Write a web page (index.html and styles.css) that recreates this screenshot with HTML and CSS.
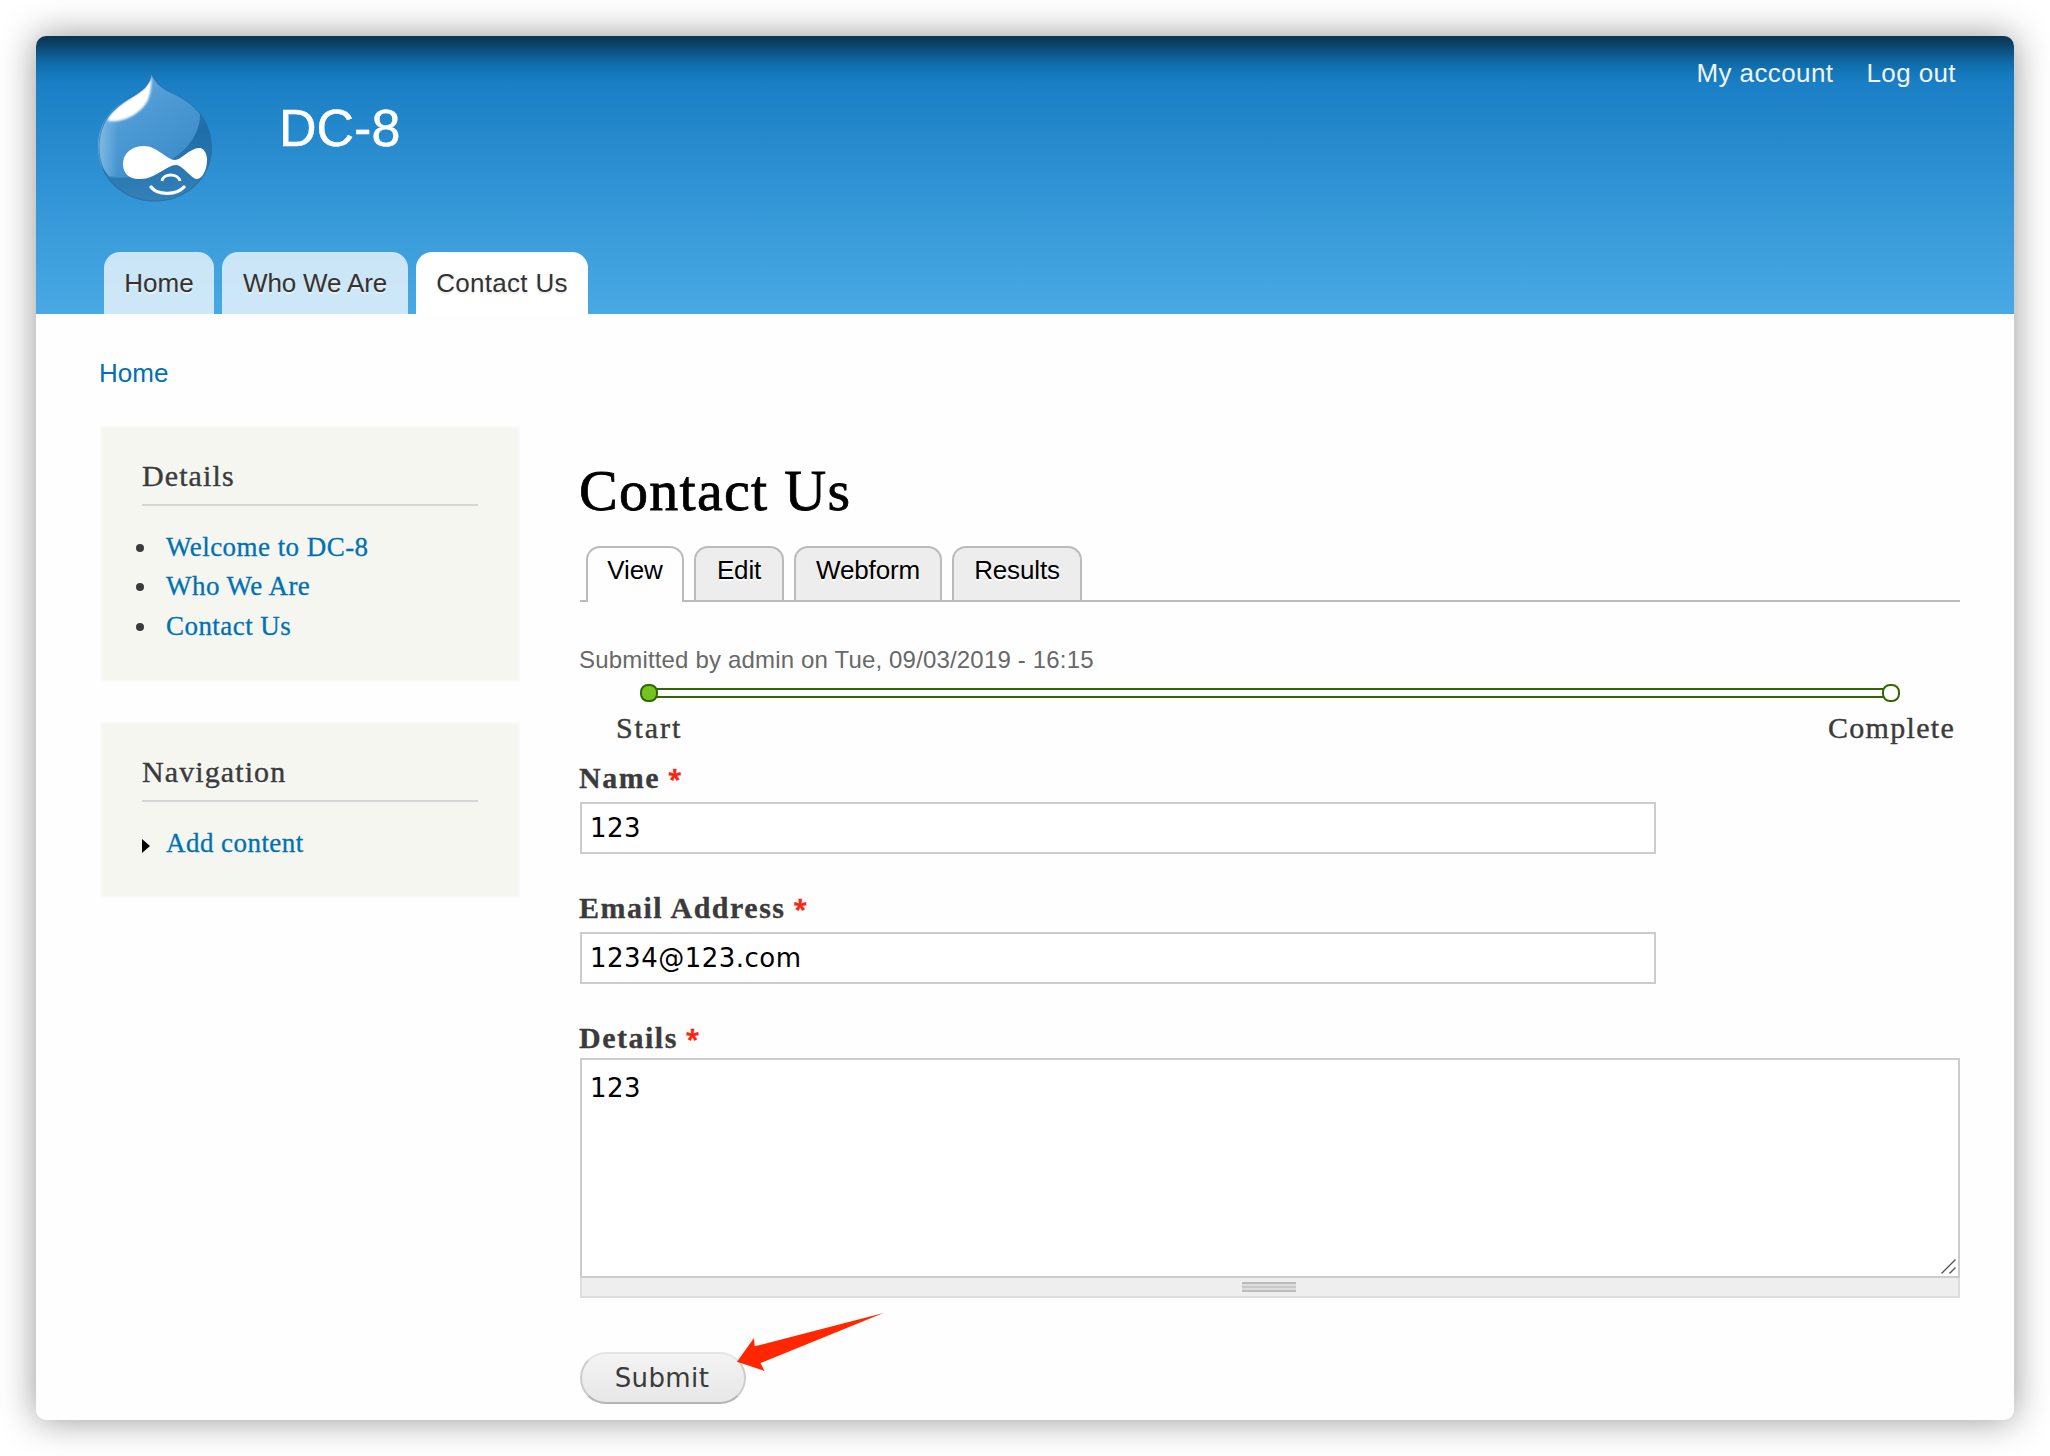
FILE: index.html
```html
<!DOCTYPE html>
<html lang="en">
<head>
<meta charset="utf-8">
<title>Contact Us | DC-8</title>
<link rel="stylesheet" href="styles.css">
</head>
<body>
<div class="window">
  <header class="header">
    <div class="brand">
      <svg class="logo" viewBox="0 0 114 130" aria-hidden="true">
        <defs>
          <linearGradient id="body" x1="0" y1="0" x2="0.7" y2="1">
            <stop offset="0" stop-color="#7cb4e0"/>
            <stop offset="0.45" stop-color="#4e9bd5"/>
            <stop offset="1" stop-color="#3b8cc9"/>
          </linearGradient>
          <linearGradient id="shade" x1="0" y1="0" x2="0" y2="1">
            <stop offset="0" stop-color="#2f82c0"/>
            <stop offset="0.45" stop-color="#1f6da8"/>
            <stop offset="1" stop-color="#3480b8"/>
          </linearGradient>
          <linearGradient id="rim" x1="0" y1="0" x2="1" y2="0">
            <stop offset="0" stop-color="#8fc3ea" stop-opacity="0.8"/>
            <stop offset="0.4" stop-color="#8fc3ea" stop-opacity="0"/>
          </linearGradient>
          <filter id="soft" x="-20%" y="-20%" width="140%" height="140%"><feGaussianBlur stdDeviation="1.1"/></filter>
          <clipPath id="drop"><path d="M53 1C57 10 62 15 70 19C92 28 114 45 114 76C114 107 87 129.500 57 129.500C26 129.500 0 107 0 75C0 50 14 36 32 26C44 19 53 13 53 1Z"/></clipPath>
        </defs>
        <g clip-path="url(#drop)">
          <rect width="114" height="130" fill="url(#shade)"/>
          <path d="M0 0H84C92 22 101 32 102 42C102 62 90 76 76 86L40 104Q25 107 11 105L0 90Z" fill="url(#body)"/>
          <path d="M0 20H50V104H11L0 90Z" fill="url(#rim)"/>
          <path d="M53 4C54 12 53 20 50 28C43 42 25 51 10 49C9 44 22 32 33 26C45 19 51 12 53 4Z" fill="#fff" filter="url(#soft)"/>
        </g>
        <path d="M53 1C57 10 62 15 70 19C92 28 113 45 113 76C113 107 87 129 57 129C26 129 1 107 1 75C1 50 14 37 32 26C44 19 53 13 53 1Z" fill="none" stroke="#266fa5" stroke-opacity="0.65" stroke-width="1.2"/>
        <path d="M77 88C83 88 93 75 102 76C107 77 109 83 109 88C109 98 104 107 99 107C93 107 85 93 78 93C69 93 57 107 43 107C32 108 25 102 25 92C25 81 34 74 46 74C59 74 69 88 77 88Z" fill="#fff"/>
        <path d="M64 109C65 101 80 101 82 109" fill="none" stroke="#fff" stroke-width="2.8"/>
        <path d="M53 115C60 124 79 123 86 115" fill="none" stroke="#fff" stroke-width="3.4" stroke-linecap="round"/>
      </svg>
      <span class="site-name">DC-8</span>
    </div>
    <nav class="user-menu"><a>My account</a><a>Log out</a></nav>
    <nav class="main-menu">
      <a class="main-tab main-tab-home">Home</a>
      <a class="main-tab main-tab-who">Who We Are</a>
      <a class="main-tab main-tab-contact active">Contact Us</a>
    </nav>
  </header>

  <div class="breadcrumb">Home</div>

  <div class="columns">
    <aside class="sidebar">
      <section class="block block-details">
        <h2>Details</h2>
        <ul>
          <li class="bullet"><a>Welcome to DC-8</a></li>
          <li class="bullet"><a>Who We Are</a></li>
          <li class="bullet"><a>Contact Us</a></li>
        </ul>
      </section>
      <section class="block block-nav">
        <h2>Navigation</h2>
        <ul>
          <li class="collapsed"><svg class="triangle" viewBox="0 0 8 14"><path d="M0 0L8 7L0 14Z"/></svg><a>Add content</a></li>
        </ul>
      </section>
    </aside>

    <main class="content">
      <h1>Contact Us</h1>
      <nav class="tabs">
        <a class="tab tab-view active">View</a>
        <a class="tab tab-edit">Edit</a>
        <a class="tab tab-webform">Webform</a>
        <a class="tab tab-results">Results</a>
      </nav>
      <p class="submitted">Submitted by admin on Tue, 09/03/2019 - 16:15</p>

      <div class="progress">
        <span class="dot done"></span><span class="track"></span><span class="dot"></span>
      </div>
      <div class="progress-labels"><span class="start">Start</span><span>Complete</span></div>

      <form>
        <div class="field">
          <label>Name <span class="required">*</span></label>
          <div class="input">123</div>
        </div>
        <div class="field">
          <label>Email Address <span class="required">*</span></label>
          <div class="input">1234@123.com</div>
        </div>
        <div class="field field-area">
          <label>Details <span class="required">*</span></label>
          <div class="textarea">
            <span>123</span>
            <svg class="resizer" viewBox="0 0 15 15"><path d="M0.5 14.5L14.5 0.5M8.5 14.5L14.5 8.5"/></svg>
          </div>
          <div class="grippie"><span class="grip"></span></div>
        </div>
        <div class="actions">
          <div class="submit">Submit</div>
          <svg class="arrow" viewBox="0 0 147 58"><path d="M0 48.7L17 25L17.7 33.3L146.5 0L23.5 50L27.5 58Z"/></svg>
        </div>
      </form>
    </main>
  </div>
</div>
</body>
</html>
```
FILE: styles.css
```css
* { box-sizing: border-box; }
body {
  margin: 0;
  padding: 36px;
  height: 1456px;
  overflow: hidden;
  background: #fff;
  color: #3b3b3b;
  font-family: "Liberation Serif", serif;
}
h1, h2, p, ul { margin: 0; padding: 0; font-weight: normal; }
ul { list-style: none; }

.window {
  width: 1978px;
  height: 1384px;
  border-radius: 10px;
  background: #fefefe;
  box-shadow: 0 0 36px rgba(0, 0, 0, 0.42);
}

/* Header */
.header {
  display: grid;
  grid-template-columns: auto 1fr;
  grid-template-rows: 216px 62px;
  border-radius: 10px 10px 0 0;
  background: linear-gradient(#0a3454 0, #0b3f65 7px, #0d5789 17px, #0f69a5 26px, #1377b9 36px, #1a7fc5 48px, #2286ca 85px, #2f92d4 145px, #3c9edb 210px, #48a9e4 278px);
  font-family: "Liberation Sans", Arial, sans-serif;
}
.brand { display: flex; gap: 67px; padding-left: 62px; }
.logo { width: 114px; height: 130px; margin-top: 36px; }
.site-name { margin-top: 62px; font-size: 52px; line-height: 60px; color: #fff; -webkit-text-stroke: 0.5px; }
.user-menu {
  display: flex;
  justify-content: flex-end;
  gap: 33px;
  padding: 19px 58px 0 0;
  font-size: 26px;
  line-height: 36px;
  letter-spacing: 0.4px;
  color: #f0f3f7;
}
.main-menu { grid-column: 1 / 3; display: flex; gap: 8px; padding-left: 68px; }
.main-tab {
  border-radius: 16px 16px 0 0;
  background: rgba(255, 255, 255, 0.73);
  color: #333;
  font-size: 26px;
  line-height: 62px;
  text-align: center;
  white-space: nowrap;
  text-shadow: 0 2px #eee;
}
.main-tab.active { background: #fff; }
.main-tab-home { width: 110px; }
.main-tab-who { width: 186px; letter-spacing: -0.15px; }
.main-tab-contact { width: 172px; letter-spacing: 0.3px; }

.breadcrumb {
  padding: 39px 0 0 63px;
  font: 26px/40px "Liberation Sans", Arial, sans-serif;
  color: #0071b3;
}
.columns { display: flex; gap: 60px; padding: 33px 54px 0 64px; }

/* Sidebar */
.sidebar { width: 420px; display: flex; flex-direction: column; gap: 40px; }
.block { padding: 28px 40px 0; border: 2px solid #f9f9f9; background: #f6f6f1; }
.block-details { height: 256px; }
.block-nav { height: 176px; }
.block h2 {
  height: 50px;
  margin-bottom: 22px;
  border-bottom: 2px solid #d6d6d6;
  font-size: 30px;
  line-height: 40px;
  letter-spacing: 1.1px;
  text-shadow: 0 2px #fff;
  -webkit-text-stroke: 0.4px;
}
.block li {
  display: flex;
  align-items: center;
  font-size: 27px;
  line-height: 39.3px;
  letter-spacing: 0.45px;
  color: #0071b3;
  -webkit-text-stroke: 0.3px;
}
.bullet::before {
  content: "";
  width: 8px;
  height: 8px;
  margin: 1px 22px 0 -6px;
  border-radius: 50%;
  background: #3b3b3b;
}
.triangle { width: 8px; height: 14px; margin: 4px 16px 0 0; }

/* Content */
.content { width: 1380px; padding-top: 30px; }
h1 { margin-left: -1px; font-size: 58px; line-height: 70px; letter-spacing: 1.3px; color: #000; -webkit-text-stroke: 0.8px; }
.tabs {
  display: flex;
  gap: 10px;
  height: 56px;
  margin-top: 20px;
  padding-left: 6px;
  border-bottom: 2px solid #bbb;
  font: 26px/45px "Liberation Sans", Arial, sans-serif;
  letter-spacing: -0.15px;
  color: #000;
}
.tab {
  height: 54px;
  border: 2px solid #bbb;
  border-bottom: 0;
  border-radius: 14px 14px 0 0;
  background: #ededed;
  text-align: center;
  text-shadow: 0 2px #fff;
}
.tab.active { height: 56px; background: #fefefe; }
.tab-view { width: 98px; }
.tab-edit { width: 90px; }
.tab-webform { width: 148px; }
.tab-results { width: 130px; }
.submitted {
  margin: 40px 0 0 -1px;
  font: 24px/36px "Liberation Sans", Arial, sans-serif;
  letter-spacing: 0.17px;
  color: #686868;
}

.progress { display: flex; align-items: center; margin-top: 6px; padding: 0 60px; }
.dot { width: 18px; height: 18px; border: 2px solid #360; border-radius: 8px; background: #fff; }
.dot.done { background: #74c421; }
.track { flex: 1; height: 10px; margin: 0 -2px; border: solid #360; border-width: 2px 0; }
.progress-labels {
  display: flex;
  justify-content: space-between;
  margin-top: 8px;
  padding: 0 5px 0 36px;
  font-size: 30px;
  line-height: 36px;
  letter-spacing: 1.3px;
  -webkit-text-stroke: 0.4px;
}
.start { letter-spacing: 1.9px; }

/* Form */
.field { padding-top: 14px; margin-bottom: 22px; }
label {
  display: block;
  margin: 0 0 6px -1px;
  font-size: 30px;
  font-weight: bold;
  line-height: 36px;
  letter-spacing: 1.5px;
  -webkit-text-stroke: 0.3px;
}
.required {
  margin-left: -1px;
  color: #f21;
  font-family: "Noto Sans", sans-serif;
  font-size: 25px;
  line-height: 1;
}
.input, .textarea {
  border: 2px solid #ccc;
  background: #fff;
  color: #000;
  font: 26px/48px "DejaVu Sans", sans-serif;
  letter-spacing: 0.5px;
}
.input { width: 1076px; height: 52px; padding-left: 8px; }
.field-area { margin-bottom: 0; }
.field-area label { margin-bottom: 2px; }
.textarea {
  display: flex;
  justify-content: space-between;
  height: 220px;
  padding: 4px 2px 2px 8px;
}
.resizer { align-self: flex-end; width: 15px; height: 15px; fill: none; stroke: #555; stroke-width: 1.4; }
.grippie {
  display: flex;
  justify-content: center;
  height: 20px;
  padding-top: 4px;
  border: 2px solid #ddd;
  border-top: 0;
  background: #eee;
}
.grip {
  width: 54px;
  height: 10px;
  margin-right: 2px;
  background: linear-gradient(#bbb 0 2px, #ddd 2px 4px, #c8c8c8 4px 6px, #ddd 6px 8px, #bbb 8px);
}
.actions { position: relative; padding-top: 54px; }
.submit {
  width: 166px;
  height: 52px;
  padding-right: 2px;
  border: 2px solid #ccc;
  border-top-color: #e4e4e4;
  border-bottom-color: #b4b4b4;
  border-radius: 26px;
  background: linear-gradient(#f3f3f3, #e7e7e7);
  color: #3a3a3a;
  font: 26px/49px "DejaVu Sans", sans-serif;
  letter-spacing: 0.4px;
  text-align: center;
}
/* Callout arrow over the submit button */
.arrow { position: absolute; left: 156.5px; top: 15px; width: 147px; height: 58px; fill: #ff2600; }
```
